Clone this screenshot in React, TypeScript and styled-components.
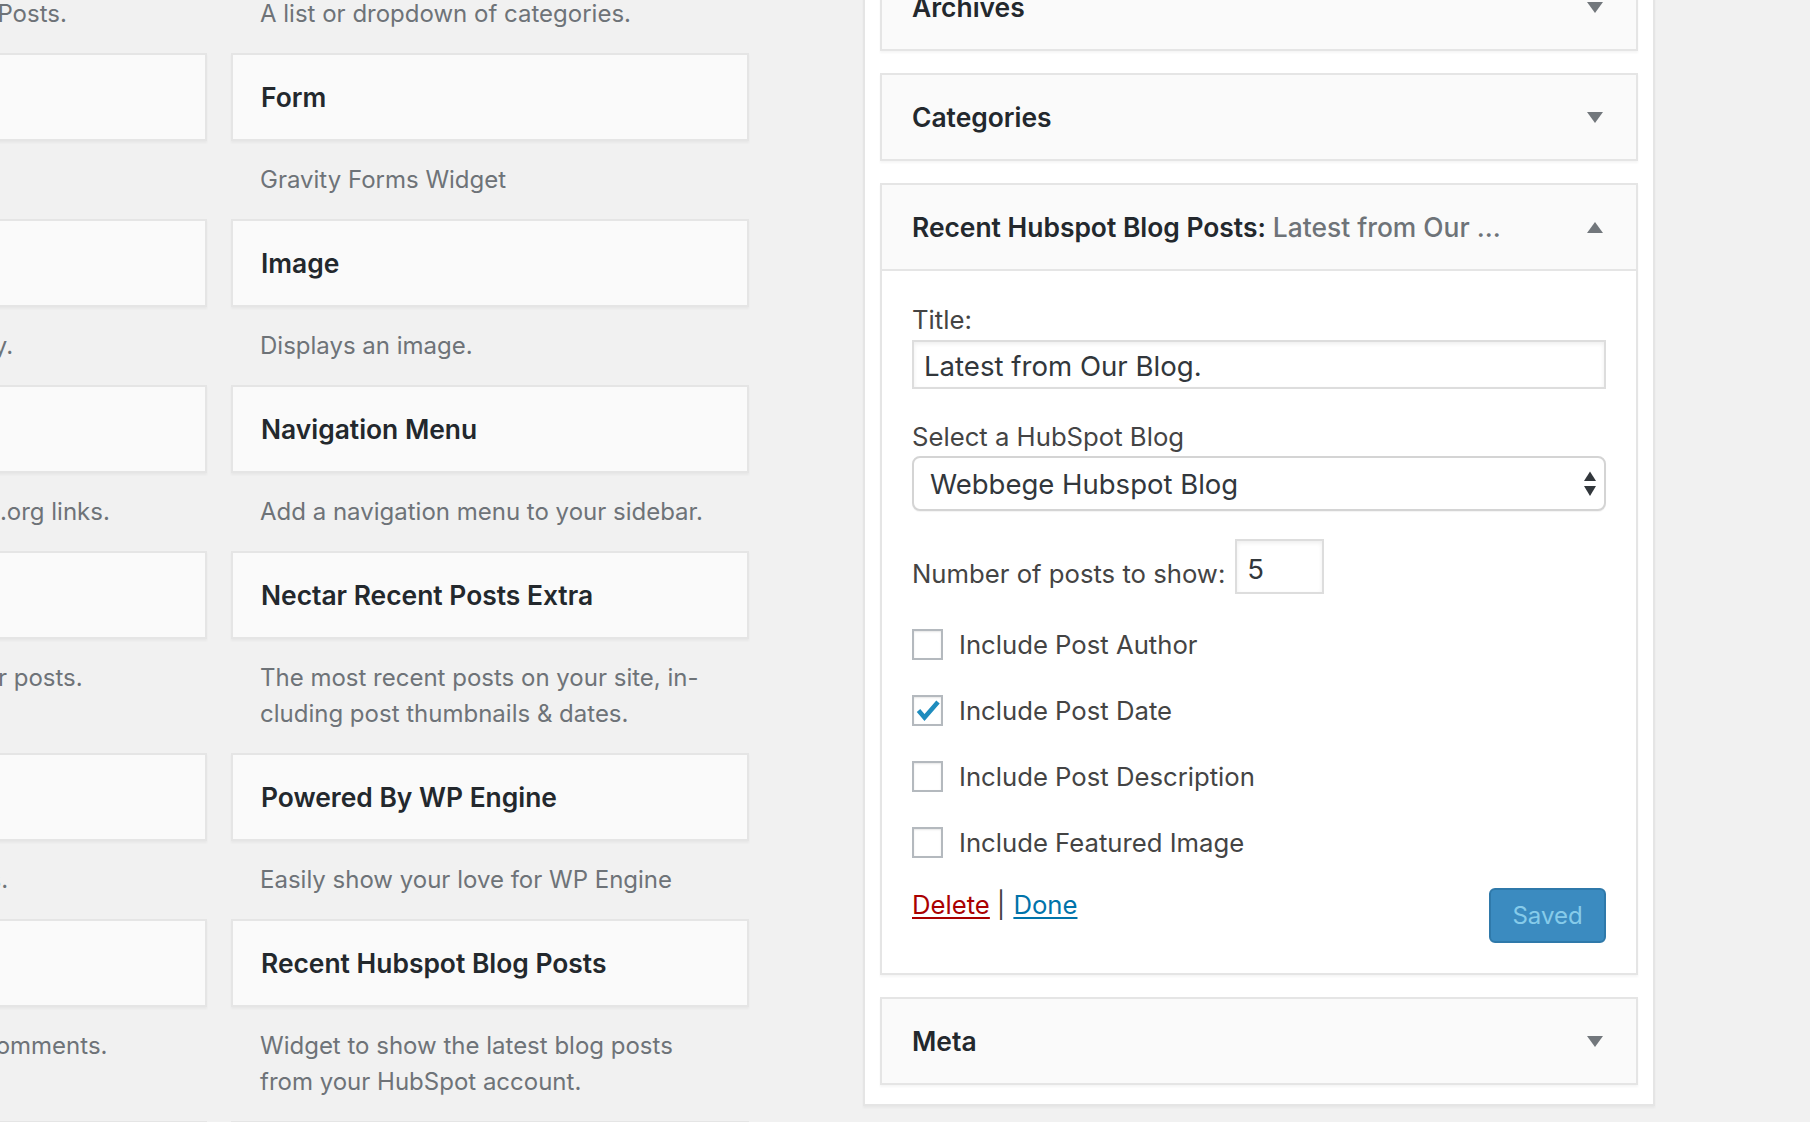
import React from "react";
import styled, { createGlobalStyle } from "styled-components";

const GlobalStyle = createGlobalStyle`
  html, body { margin: 0; padding: 0; }
  body {
    background: #f1f1f1;
    font-family: Inter, "Noto Sans", "Liberation Sans", sans-serif;
    color: #444;
    overflow: hidden;
  }
  *, *::before, *::after { box-sizing: border-box; }
`;

const Page = styled.div`
  display: flex;
  align-items: flex-start;
  height: 1122px;
  overflow: hidden;
`;

const AvailableArea = styled.section`
  flex: 0 0 863px;
  height: 100%;
`;

const WidgetGrid = styled.div`
  display: grid;
  grid-template-columns: 518px 518px;
  column-gap: 24px;
  margin-left: -311px;
  margin-top: -113px;
`;

const WidgetItem = styled.div`
  display: flex;
  flex-direction: column;
`;

const WidgetBox = styled.div`
  height: 88px;
  display: flex;
  align-items: center;
  padding: 0 28px;
  background: #fafafa;
  border: 2px solid #e5e5e5;
  box-shadow: 0 2px 2px rgba(0, 0, 0, 0.04);
`;

const WidgetName = styled.h3`
  margin: 0;
  font-size: 26.4px;
  font-weight: 600;
  color: #23282d;
  line-height: 32px;
  white-space: nowrap;
`;

const WidgetDesc = styled.p`
  margin: 0;
  padding: 21px 30px 21px 29px;
  font-size: 24px;
  line-height: 36px;
  color: #6e7378;
  white-space: pre-line;
`;

const Sidebar = styled.aside`
  flex: 0 0 792px;
  margin-top: -39px;
  background: #fff;
  border: 2px solid #e5e5e5;
  padding: 0 15px 19px;
  display: flex;
  flex-direction: column;
  gap: 22px;
  box-shadow: 0 2px 2px rgba(0, 0, 0, 0.04);
`;

const Card = styled.div`
  border: 2px solid #e5e5e5;
  background: #fafafa;
  box-shadow: 0 2px 2px rgba(0, 0, 0, 0.04);
`;

const CardHeader = styled.div`
  height: 84px;
  display: flex;
  align-items: center;
  justify-content: space-between;
  padding: 0 33px 0 30px;
`;

const CardTitle = styled.h3`
  margin: 0;
  font-size: 26.4px;
  font-weight: 600;
  color: #23282d;
  white-space: nowrap;
`;

const TitleSuffix = styled.span`
  font-weight: 500;
  color: #6e7378;
`;

const CardInside = styled.div`
  border-top: 2px solid #e5e5e5;
  background: #fff;
  padding: 31px 30px 30px;
  display: flex;
  flex-direction: column;
`;

const Field = styled.div<{ $gap: number }>`
  display: flex;
  flex-direction: column;
  margin-top: ${(p) => p.$gap}px;
`;

const FieldLabel = styled.label`
  display: block;
  font-size: 25.7px;
  line-height: 36px;
  color: #444;
`;

const TextInput = styled.input`
  display: block;
  width: 100%;
  height: 49px;
  margin-top: 2px;
  border: 2px solid #ddd;
  padding: 2px 10px 0;
  font-family: inherit;
  font-size: 27.6px;
  color: #32373c;
  background: #fff;
  box-shadow: inset 0 2px 4px rgba(0, 0, 0, 0.07);
  outline: none;
`;

const SelectWrap = styled.div`
  display: grid;
  margin-top: 1px;
`;

const Select = styled.select`
  grid-area: 1 / 1;
  appearance: none;
  -webkit-appearance: none;
  height: 55px;
  width: 100%;
  border: 2px solid #d4d4d4;
  border-radius: 8px;
  padding: 0 40px 0 16px;
  font-family: inherit;
  font-size: 27.5px;
  color: #32373c;
  background: #fff;
  box-shadow: 0 1px 1px rgba(0, 0, 0, 0.05);
  outline: none;
`;

const SelectArrows = styled.svg`
  grid-area: 1 / 1;
  justify-self: end;
  align-self: center;
  margin-right: 9px;
  pointer-events: none;
`;

const InlineField = styled.div`
  display: flex;
  align-items: flex-end;
  gap: 10px;
  margin-top: 28px;
`;

const InlineLabel = styled.label`
  font-size: 25.7px;
  line-height: 36px;
  color: #444;
  margin-bottom: 2px;
`;

const NumberInput = styled.input`
  width: 89px;
  height: 55px;
  border: 2px solid #ddd;
  padding: 5px 10px 0;
  font-family: inherit;
  font-size: 27.5px;
  color: #32373c;
  background: #fff;
  box-shadow: inset 0 2px 4px rgba(0, 0, 0, 0.07);
  outline: none;
`;

const CheckList = styled.div`
  display: flex;
  flex-direction: column;
  gap: 30px;
  margin-top: 32px;
`;

const CheckRow = styled.label`
  display: flex;
  align-items: center;
  gap: 16px;
  height: 36px;
  font-size: 25.7px;
  color: #444;
`;

const CheckBox = styled.span`
  flex: none;
  width: 31px;
  height: 31px;
  border: 2px solid #b4b9be;
  background: #fff;
  box-shadow: inset 0 1px 2px rgba(0, 0, 0, 0.1);
  display: flex;
  align-items: center;
  justify-content: center;
`;

const Actions = styled.div`
  display: flex;
  justify-content: space-between;
  align-items: flex-start;
  margin-top: 28px;
`;

const LinkGroup = styled.div`
  font-size: 25.7px;
  line-height: 36px;
  color: #444;
  display: flex;
  align-items: baseline;
  margin-top: -1px;
`;

const Separator = styled.span`
  margin: 0 8px 0 7px;
`;

const ActionLink = styled.a<{ $tone: "danger" | "primary" }>`
  color: ${(p) => (p.$tone === "danger" ? "#a00" : "#0073aa")};
  text-decoration: underline;
  text-underline-offset: 3px;
  cursor: pointer;
`;

const SaveButton = styled.button`
  width: 117px;
  height: 55px;
  border: 2px solid #2f79aa;
  border-radius: 6px;
  background: #3b8bc0;
  color: #86cbea;
  font-family: inherit;
  font-size: 24px;
  padding: 0;
`;

const Toggle = ({ open }: { open?: boolean }) => (
  <svg width="16" height="11" viewBox="0 0 16 11" aria-hidden="true">
    {open ? (
      <polygon points="0,11 16,11 8,0" fill="#72777c" />
    ) : (
      <polygon points="0,0 16,0 8,11" fill="#72777c" />
    )}
  </svg>
);

const CheckMark = () => (
  <svg width="27" height="27" viewBox="0 0 27 27" aria-hidden="true">
    <path
      d="M4.5 13.5 L10.5 20.5 L24 5"
      fill="none"
      stroke="#1e8cbe"
      strokeWidth="4.5"
      strokeLinejoin="miter"
    />
  </svg>
);

type Widget = { name: string; desc: string };

const widgets: Widget[] = [
  { name: "Calendar", desc: "A calendar of your site’s Posts." },
  { name: "Categories", desc: "A list or dropdown of categories." },
  { name: "Custom HTML", desc: "Arbitrary HTML code." },
  { name: "Form", desc: "Gravity Forms Widget" },
  { name: "Gallery", desc: "Displays an image gallery." },
  { name: "Image", desc: "Displays an image." },
  { name: "Meta", desc: "Login, RSS, & WordPress.org links." },
  { name: "Navigation Menu", desc: "Add a navigation menu to your sidebar." },
  { name: "Nectar Popular Posts", desc: "Shows your most popular posts." },
  {
    name: "Nectar Recent Posts Extra",
    desc: "The most recent posts on your site, in-\ncluding post thumbnails & dates.",
  },
  { name: "Pages", desc: "A list of your site’s Pages." },
  { name: "Powered By WP Engine", desc: "Easily show your love for WP Engine" },
  { name: "Recent Comments", desc: "Your site’s most recent comments." },
  {
    name: "Recent Hubspot Blog Posts",
    desc: "Widget to show the latest blog posts\nfrom your HubSpot account.",
  },
  { name: "Recent Posts", desc: "Your site’s most recent Posts." },
  { name: "RSS", desc: "Entries from any RSS or Atom feed." },
];

const checks = [
  { label: "Include Post Author", checked: false },
  { label: "Include Post Date", checked: true },
  { label: "Include Post Description", checked: false },
  { label: "Include Featured Image", checked: false },
];

export default function App() {
  return (
    <>
      <GlobalStyle />
      <Page>
        <AvailableArea>
          <WidgetGrid>
            {widgets.map((w) => (
              <WidgetItem key={w.name}>
                <WidgetBox>
                  <WidgetName>{w.name}</WidgetName>
                </WidgetBox>
                <WidgetDesc>{w.desc}</WidgetDesc>
              </WidgetItem>
            ))}
          </WidgetGrid>
        </AvailableArea>

        <Sidebar>
          <Card>
            <CardHeader>
              <CardTitle>Archives</CardTitle>
              <Toggle />
            </CardHeader>
          </Card>
          <Card>
            <CardHeader>
              <CardTitle>Categories</CardTitle>
              <Toggle />
            </CardHeader>
          </Card>
          <Card>
            <CardHeader>
              <CardTitle>
                Recent Hubspot Blog Posts:<TitleSuffix> Latest from Our ...</TitleSuffix>
              </CardTitle>
              <Toggle open />
            </CardHeader>
            <CardInside>
              <Field $gap={0}>
                <FieldLabel htmlFor="hs-title">Title:</FieldLabel>
                <TextInput id="hs-title" defaultValue="Latest from Our Blog." />
              </Field>
              <Field $gap={30}>
                <FieldLabel htmlFor="hs-blog">Select a HubSpot Blog</FieldLabel>
                <SelectWrap>
                  <Select id="hs-blog" defaultValue="webbege">
                    <option value="webbege">Webbege Hubspot Blog</option>
                  </Select>
                  <SelectArrows width="14" height="26" viewBox="0 0 14 26" aria-hidden="true">
                    <polygon points="1,10 7,0.5 13,10" fill="#32373c" />
                    <polygon points="1,15 13,15 7,25" fill="#32373c" />
                  </SelectArrows>
                </SelectWrap>
              </Field>
              <InlineField>
                <InlineLabel htmlFor="hs-count">Number of posts to show:</InlineLabel>
                <NumberInput id="hs-count" defaultValue="5" />
              </InlineField>
              <CheckList>
                {checks.map((c) => (
                  <CheckRow key={c.label}>
                    <CheckBox role="checkbox" aria-checked={c.checked}>
                      {c.checked && <CheckMark />}
                    </CheckBox>
                    {c.label}
                  </CheckRow>
                ))}
              </CheckList>
              <Actions>
                <LinkGroup>
                  <ActionLink $tone="danger">Delete</ActionLink>
                  <Separator>|</Separator>
                  <ActionLink $tone="primary">Done</ActionLink>
                </LinkGroup>
                <SaveButton disabled>Saved</SaveButton>
              </Actions>
            </CardInside>
          </Card>
          <Card>
            <CardHeader>
              <CardTitle>Meta</CardTitle>
              <Toggle />
            </CardHeader>
          </Card>
        </Sidebar>
      </Page>
    </>
  );
}
